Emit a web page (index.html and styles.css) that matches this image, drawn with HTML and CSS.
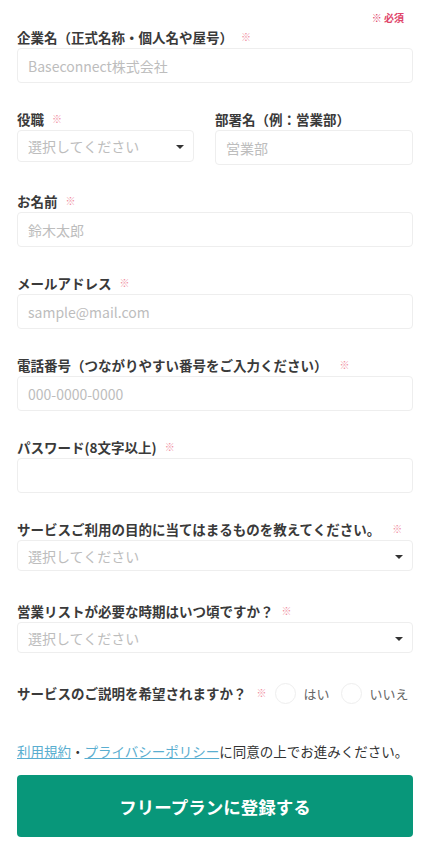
FILE: index.html
```html
<!DOCTYPE html>
<html lang="ja">

<head>
    <meta charset="UTF-8">
    <meta name="viewport" content="width=device-width, initial-scale=1.0">
    <title>無料登録</title>
    <link rel="stylesheet" href="styles.css">
</head>

<body>

    <form class="signup">
        <p class="note">※ 必須</p>

        <div class="field">
            <label class="label">企業名（正式名称・個人名や屋号）<span class="req">※</span></label>
            <input class="input" type="text" placeholder="Baseconnect株式会社">
        </div>

        <div class="field row">
            <div>
                <label class="label">役職<span class="req">※</span></label>
                <div class="select small">
                    <select>
                        <option>選択してください</option>
                    </select>
                </div>
            </div>
            <div>
                <label class="label">部署名（例：営業部）</label>
                <input class="input" type="text" placeholder="営業部">
            </div>
        </div>

        <div class="field">
            <label class="label">お名前<span class="req">※</span></label>
            <input class="input" type="text" placeholder="鈴木太郎">
        </div>

        <div class="field">
            <label class="label">メールアドレス<span class="req">※</span></label>
            <input class="input" type="email" placeholder="sample@mail.com">
        </div>

        <div class="field">
            <label class="label">電話番号（つながりやすい番号をご入力ください）<span class="req wide">※</span></label>
            <input class="input" type="tel" placeholder="000-0000-0000">
        </div>

        <div class="field">
            <label class="label">パスワード(8文字以上)<span class="req">※</span></label>
            <input class="input" type="password">
        </div>

        <div class="field">
            <label class="label">サービスご利用の目的に当てはまるものを教えてください。<span class="req wide">※</span></label>
            <div class="select">
                <select>
                    <option>選択してください</option>
                </select>
            </div>
        </div>

        <div class="field">
            <label class="label">営業リストが必要な時期はいつ頃ですか？<span class="req">※</span></label>
            <div class="select">
                <select>
                    <option>選択してください</option>
                </select>
            </div>
        </div>

        <div class="radio-row">
            <span class="label">サービスのご説明を希望されますか？<span class="req">※</span></span>
            <label class="radio"><input type="radio" name="explain"><span class="circle"></span>はい</label>
            <label class="radio"><input type="radio" name="explain"><span class="circle"></span>いいえ</label>
        </div>

        <p class="consent">
            <a href="#">利用規約</a>・<a href="#">プライバシーポリシー</a>に同意の上でお進みください。
        </p>

        <button class="submit" type="button">フリープランに登録する</button>
    </form>

</body>

</html>
```

FILE: styles.css
```css
body {
    margin: 0;
    background-color: #ffffff;
    color: #333333;
    font-family: "Noto Sans CJK JP", "Noto Sans", sans-serif;
}

.signup {
    padding: 0 17px;
}

.note {
    margin: 10px 9px 1px 0;
    text-align: right;
    font-size: 10px;
    line-height: 16px;
    font-weight: bold;
    color: #e0456a;
}

.field {
    margin-bottom: 26px;
}

.label {
    display: flex;
    align-items: center;
    height: 20px;
    margin-bottom: 1px;
    font-size: 13.5px;
    line-height: 20px;
    font-weight: bold;
    color: #3a3a3a;
    white-space: nowrap;
}

.req {
    margin-left: 8px;
    font-size: 10px;
    line-height: 10px;
    font-weight: normal;
    color: #ef8ea0;
}

.req.wide {
    margin-left: 12px;
}

.input,
.select select {
    box-sizing: border-box;
    width: 100%;
    height: 35px;
    padding: 0 10px;
    border: 1px solid #eeeeee;
    border-radius: 4px;
    background-color: #ffffff;
    font-family: inherit;
    font-size: 14px;
    color: #333333;
    outline: none;
}

.input::placeholder {
    color: #bdbdbd;
}

.row {
    display: grid;
    grid-template-columns: 177px 1fr;
    gap: 21px;
}

.select {
    position: relative;
}

.select select {
    height: 31px;
    margin-bottom: 4px;
    appearance: none;
    -webkit-appearance: none;
    color: #bdbdbd;
}

.select.small select {
    height: 32px;
    margin-bottom: 3px;
}

.select::after {
    content: "";
    position: absolute;
    right: 10px;
    top: 15px;
    border-left: 4px solid transparent;
    border-right: 4px solid transparent;
    border-top: 4px solid #333333;
}

.radio-row {
    display: flex;
    align-items: center;
    height: 24px;
    margin-top: -2px;
}

.radio-row .label {
    flex-shrink: 0;
    margin: 0 8px 0 0;
}

.radio-row .req {
    margin-left: 10px;
}

.radio {
    display: flex;
    align-items: center;
    flex-shrink: 0;
    margin-right: 11px;
    font-size: 13px;
    color: #666666;
    white-space: nowrap;
}

.radio input {
    display: none;
}

.circle {
    box-sizing: border-box;
    width: 21px;
    height: 21px;
    margin-right: 8px;
    border: 1px solid #eeeeee;
    border-radius: 50%;
}

.consent {
    margin: 36px 0 0;
    font-size: 13.5px;
    line-height: 20px;
    color: #333333;
}

.consent a {
    color: #5aaed0;
}

.submit {
    display: block;
    width: 100%;
    height: 62px;
    margin-top: 14px;
    border: none;
    border-radius: 4px;
    background-color: #08977a;
    color: #ffffff;
    font-family: inherit;
    font-size: 17.5px;
    font-weight: bold;
    cursor: pointer;
}
```
